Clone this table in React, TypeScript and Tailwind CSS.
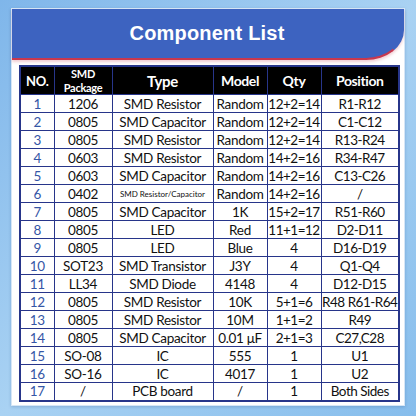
const rows: [string, string, string, string, string, string][] = [
  ['1', '1206', 'SMD Resistor', 'Random', '12+2=14', 'R1-R12'],
  ['2', '0805', 'SMD Capacitor', 'Random', '12+2=14', 'C1-C12'],
  ['3', '0805', 'SMD Resistor', 'Random', '12+2=14', 'R13-R24'],
  ['4', '0603', 'SMD Resistor', 'Random', '14+2=16', 'R34-R47'],
  ['5', '0603', 'SMD Capacitor', 'Random', '14+2=16', 'C13-C26'],
  ['6', '0402', 'SMD Resistor/Capacitor', 'Random', '14+2=16', '/'],
  ['7', '0805', 'SMD Capacitor', '1K', '15+2=17', 'R51-R60'],
  ['8', '0805', 'LED', 'Red', '11+1=12', 'D2-D11'],
  ['9', '0805', 'LED', 'Blue', '4', 'D16-D19'],
  ['10', 'SOT23', 'SMD Transistor', 'J3Y', '4', 'Q1-Q4'],
  ['11', 'LL34', 'SMD Diode', '4148', '4', 'D12-D15'],
  ['12', '0805', 'SMD Resistor', '10K', '5+1=6', 'R48 R61-R64'],
  ['13', '0805', 'SMD Resistor', '10M', '1+1=2', 'R49'],
  ['14', '0805', 'SMD Capacitor', '0.01 μF', '2+1=3', 'C27,C28'],
  ['15', 'SO-08', 'IC', '555', '1', 'U1'],
  ['16', 'SO-16', 'IC', '4017', '1', 'U2'],
  ['17', '/', 'PCB board', '/', '1', 'Both Sides'],
];

const cell = 'border border-[#27358a] p-0 text-center whitespace-nowrap overflow-hidden';

export default function App() {
  return (
    <div className="w-[416px] h-[416px] overflow-hidden bg-gradient-to-br from-[#7fb6ea] via-[#a9d2f3] to-[#86bdec] pt-[8px] pl-[11px] font-['Lato',sans-serif]">
      <div className="w-[394px] h-[398px] bg-white border border-[#d6e6f6] shadow-[0_1px_3px_rgba(40,80,140,0.25)]">
        {/* Titel-Band */}
        <div className="h-[51px] bg-[#3d63c0] rounded-br-[38px_30px] border-b-2 border-r-2 border-b-[#c8384e] border-r-transparent flex items-center justify-center shadow-[0_2px_3px_rgba(200,60,80,0.25)]">
          <h1 className="text-white text-[20px] font-bold font-['Liberation_Sans',Arial,sans-serif] tracking-[0.2px] mb-[2px]">
            Component List
          </h1>
        </div>

        <div className="pl-[7px] pt-[5px]">
          <table className="border-collapse border-2 border-[#27358a] table-fixed w-[379px] text-[13.5px] leading-[14px] tracking-[-0.3px] text-[#111]">
            <colgroup>
              <col className="w-[34px]" />
              <col className="w-[58px]" />
              <col className="w-[101px]" />
              <col className="w-[54px]" />
              <col className="w-[54px]" />
              <col className="w-[78px]" />
            </colgroup>
            <thead>
              <tr className="h-[28px] bg-black text-white font-bold">
                <th className={`${cell} text-[13px]`}>NO.</th>
                <th className={`${cell} text-[11px] leading-[13.5px] tracking-[-0.3px]`}>
                  SMD
                  <br />
                  Package
                </th>
                <th className={`${cell} text-[15px]`}>Type</th>
                <th className={`${cell} text-[14px] tracking-[-0.4px]`}>Model</th>
                <th className={`${cell} text-[14px]`}>Qty</th>
                <th className={`${cell} text-[14px] tracking-[-0.4px]`}>Position</th>
              </tr>
            </thead>
            <tbody>
              {rows.map((r) => (
                <tr key={r[0]} className="h-[18px]">
                  <td className={`${cell} text-[#3556a6]`}>{r[0]}</td>
                  <td className={cell}>{r[1]}</td>
                  <td className={`${cell} ${r[0] === '6' ? 'text-[8px] tracking-normal' : ''}`}>{r[2]}</td>
                  <td className={cell}>{r[3]}</td>
                  <td className={`${cell} tracking-[-0.5px]`}>{r[4]}</td>
                  <td className={`${cell} tracking-[-0.5px]`}>{r[5]}</td>
                </tr>
              ))}
            </tbody>
          </table>
        </div>
      </div>
    </div>
  );
}
